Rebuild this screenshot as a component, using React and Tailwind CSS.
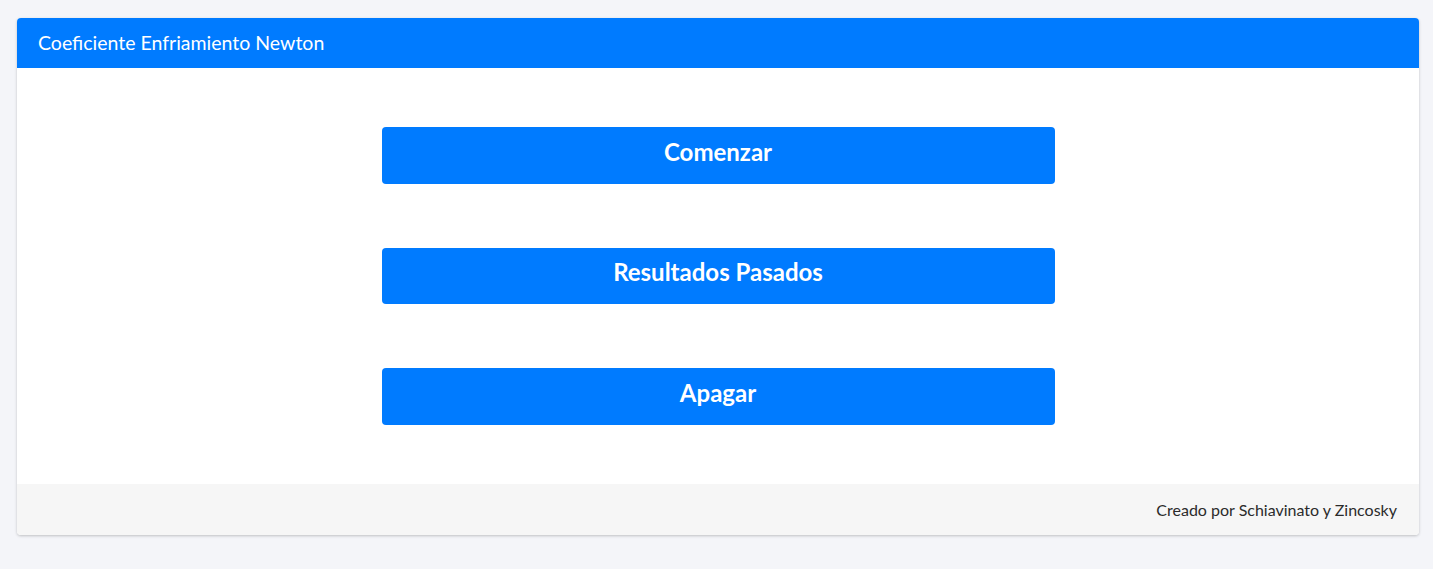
const buttons = ["Comenzar", "Resultados Pasados", "Apagar"];

const App = () => {
    return (
        <div className="min-h-screen bg-[#f4f5f9] pt-[18px] pl-[17px] pr-[14px] font-['Lato',sans-serif]">
            <div className="bg-white rounded-[4px] shadow-[0_1px_3px_rgba(0,0,0,0.22)] overflow-hidden">
                {/* header */}
                <div className="h-[50px] bg-[#007bff] flex items-center px-[21px]">
                    <h1 className="text-white text-[19.5px] leading-none">Coeficiente Enfriamiento Newton</h1>
                </div>

                {/* botones */}
                <div className="flex flex-col items-center gap-[64px] pt-[59px] pb-[59px]">
                    {buttons.map(b => (
                        <button key={b} className="w-[673px] h-[56.5px] bg-[#007bff] rounded-[4px] text-white font-bold text-[24px] leading-none pb-[7px]">
                            {b}
                        </button>
                    ))}
                </div>

                {/* footer */}
                <div className="h-[51px] bg-[#f6f6f6] flex items-center justify-end px-[22px]">
                    <p className="text-[16px] text-[#2b2b2b] pt-[2px]">Creado por Schiavinato y Zincosky</p>
                </div>
            </div>
        </div>
    )
}

export default App
